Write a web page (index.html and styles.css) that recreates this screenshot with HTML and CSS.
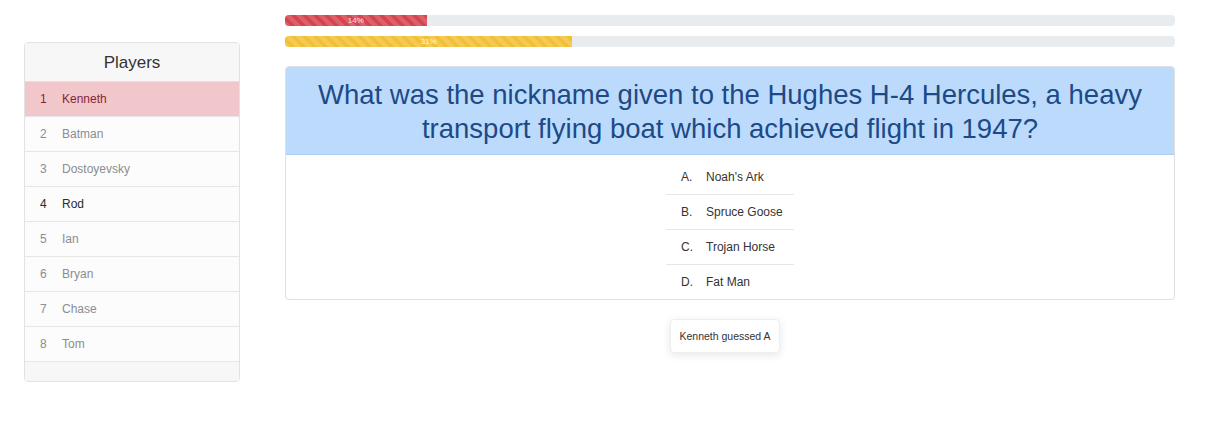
FILE: index.html
```html
<!DOCTYPE html>
<html>
<head>
  <meta charset="utf-8">
  <title>Trivia Night</title>
  <link rel="stylesheet" href="styles.css">
</head>
<body>
  <div class="game">
    <div class="sidebar">
      <div class="players-card">
        <div class="players-header">Players</div>
        <ul class="player-list">
          <li class="player current"><span class="rank">1</span>Kenneth</li>
          <li class="player"><span class="rank">2</span>Batman</li>
          <li class="player"><span class="rank">3</span>Dostoyevsky</li>
          <li class="player active"><span class="rank">4</span>Rod</li>
          <li class="player"><span class="rank">5</span>Ian</li>
          <li class="player"><span class="rank">6</span>Bryan</li>
          <li class="player"><span class="rank">7</span>Chase</li>
          <li class="player"><span class="rank">8</span>Tom</li>
        </ul>
        <div class="players-footer"></div>
      </div>
    </div>

    <div class="main">
      <div class="progress">
        <div class="progress-bar danger" style="width: 15.9%">14%</div>
      </div>
      <div class="progress">
        <div class="progress-bar warning" style="width: 32.3%">31%</div>
      </div>

      <div class="question-card">
        <div class="question-header">
          <h3>What was the nickname given to the Hughes H-4 Hercules, a heavy transport flying boat which achieved flight in 1947?</h3>
        </div>
        <ul class="answers">
          <li><span class="letter">A.</span>Noah's Ark</li>
          <li><span class="letter">B.</span>Spruce Goose</li>
          <li><span class="letter">C.</span>Trojan Horse</li>
          <li><span class="letter">D.</span>Fat Man</li>
        </ul>
      </div>

      <div class="guesses">
        <div class="guess-toast">Kenneth guessed A</div>
      </div>
    </div>
  </div>
</body>
</html>
```

FILE: styles.css
```css
body {
  margin: 0;
  font-family: "Liberation Sans", Arial, sans-serif;
  color: #212529;
  background: #fff;
}
.game {
  display: flex;
  padding: 15px 35px 0 24px;
  gap: 45px;
}
.sidebar {
  width: 216px;
  flex-shrink: 0;
  padding-top: 27px;
}
.players-card {
  border: 1px solid #e2e2e2;
  border-radius: 4px;
  background: #fff;
  overflow: hidden;
}
.players-header {
  height: 38px;
  line-height: 40px;
  text-align: center;
  font-size: 17px;
  color: #333;
  background: #f7f7f7;
  border-bottom: 1px solid #e2e2e2;
}
.player-list {
  list-style: none;
  margin: 0;
  padding: 0;
}
.player {
  height: 34px;
  line-height: 35px;
  padding-left: 15px;
  font-size: 12px;
  color: #8a8d91;
  background: #fcfcfd;
  border-bottom: 1px solid #e6e6e6;
}
.player .rank {
  display: inline-block;
  width: 22px;
}
.player.current {
  background: #f1c7cb;
  color: #842634;
}
.player.active {
  color: #2b2b2b;
}
.players-footer {
  height: 19px;
  background: #f7f7f7;
}
.main {
  flex: 1;
}
.progress {
  height: 11px;
  margin-bottom: 10px;
  background: #e9ecef;
  border-radius: 4px;
  overflow: hidden;
}
.progress-bar {
  height: 100%;
  font-size: 8px;
  line-height: 11px;
  color: rgba(255, 255, 255, 0.85);
  text-align: center;
  background-size: 11px 11px;
  background-image: linear-gradient(45deg, rgba(255,255,255,.15) 25%, transparent 25%, transparent 50%, rgba(255,255,255,.15) 50%, rgba(255,255,255,.15) 75%, transparent 75%, transparent);
}
.progress-bar.danger {
  background-color: #d6444f;
}
.progress-bar.warning {
  background-color: #f2c037;
}
.question-card {
  margin-top: 19px;
  border: 1px solid #e0e0e0;
  border-radius: 4px;
  overflow: hidden;
}
.question-header {
  background: #bcdbfc;
  border-bottom: 1px solid #a9cdf5;
  padding: 11px 20px 8px;
  text-align: center;
}
.question-header h3 {
  margin: 0;
  font-size: 27.5px;
  font-weight: 400;
  line-height: 34px;
  color: #1d4a86;
}
.answers {
  list-style: none;
  margin: 0 auto;
  padding: 5px 0 0;
  width: 128px;
}
.answers li {
  height: 34px;
  line-height: 35px;
  padding-left: 15px;
  font-size: 12px;
  color: #333;
  border-bottom: 1px solid #e6e6e6;
}
.answers li:last-child {
  border-bottom: none;
}
.answers .letter {
  display: inline-block;
  width: 25px;
}
.guesses {
  display: flex;
  justify-content: center;
  padding-top: 19px;
}
.guess-toast {
  margin-left: -10px;
  padding: 0 8px;
  height: 32px;
  line-height: 33px;
  font-size: 10.5px;
  color: #333;
  background: #fff;
  border: 1px solid #eee;
  border-radius: 4px;
  box-shadow: 0 2px 8px rgba(0, 0, 0, 0.1);
}
```
